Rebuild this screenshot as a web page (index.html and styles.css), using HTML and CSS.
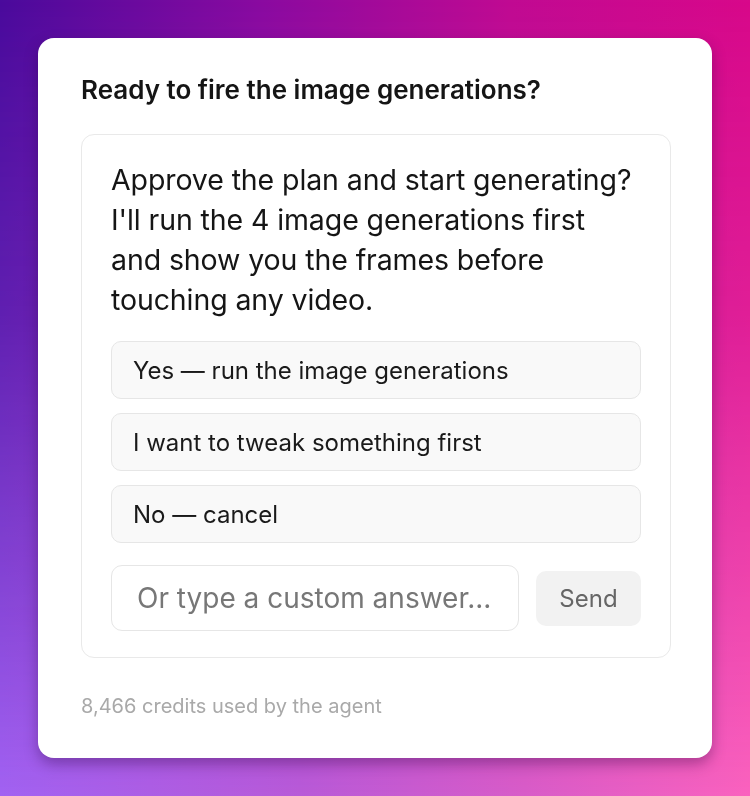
FILE: index.html
```html
<!DOCTYPE html>
<html>
<head>
<meta charset="utf-8">
<link rel="stylesheet" href="styles.css">
</head>
<body>
<div class="card">
  <h1 class="title">Ready to fire the image generations?</h1>
  <div class="panel">
    <p class="question">Approve the plan and start generating? I'll run the 4 image generations first and show you the frames before touching any video.</p>
    <div class="options">
      <button class="option">Yes — run the image generations</button>
      <button class="option">I want to tweak something first</button>
      <button class="option">No — cancel</button>
    </div>
    <div class="reply">
      <input class="answer" type="text" placeholder="Or type a custom answer...">
      <button class="send">Send</button>
    </div>
  </div>
  <div class="footer">8,466 credits used by the agent</div>
</div>
</body>
</html>
```
FILE: styles.css
```css
html, body {
  margin: 0;
  padding: 0;
}
html {
  background: linear-gradient(90deg, #4a0a9c 0%, #8a0aa0 35%, #c00a92 68%, #d8088a 100%);
}
body {
  width: 750px;
  height: 796px;
  overflow: hidden;
  font-family: Inter, "Noto Sans", sans-serif;
  padding: 38px;
  box-sizing: border-box;
}
body::before {
  content: "";
  position: fixed;
  inset: 0;
  background: linear-gradient(90deg, #a262f2 0%, #b85ad8 40%, #d85cc8 70%, #fa62be 100%);
  -webkit-mask-image: linear-gradient(180deg, rgba(0,0,0,0) 0%, rgba(0,0,0,0.25) 40%, rgba(0,0,0,1) 100%);
  mask-image: linear-gradient(180deg, rgba(0,0,0,0) 0%, rgba(0,0,0,0.25) 40%, rgba(0,0,0,1) 100%);
  z-index: 0;
}
.card {
  position: relative;
  z-index: 1;
  background: #fff;
  border-radius: 16px;
  height: 720px;
  box-sizing: border-box;
  padding: 35px 41px 0 43px;
  box-shadow: 0 6px 14px rgba(40, 0, 60, 0.35);
}
.title {
  margin: 0;
  font-size: 26px;
  font-weight: 600;
  color: #151515;
  line-height: 34px;
  letter-spacing: 0;
}
.panel {
  margin-top: 27px;
  border: 1px solid #e9e9e9;
  border-radius: 13px;
  padding: 25px 29px 26px 29px;
}
.question {
  margin: 0;
  font-size: 28.5px;
  line-height: 40px;
  color: #151515;
  font-weight: 400;
  letter-spacing: -0.1px;
}
.options {
  margin-top: 21px;
  display: flex;
  flex-direction: column;
  gap: 14px;
}
.option {
  height: 58px;
  text-align: left;
  font-family: inherit;
  font-size: 24px;
  color: #1a1a1a;
  background: #f9f9f9;
  border: 1.5px solid #e6e6e6;
  border-radius: 10px;
  padding: 0 21px;
}
.reply {
  margin-top: 22px;
  display: flex;
  align-items: center;
  gap: 17px;
}
.answer {
  width: 408px;
  height: 66px;
  box-sizing: border-box;
  border: 1.5px solid #e6e6e6;
  border-radius: 11px;
  padding: 0 20px 0 25px;
  font-family: inherit;
  font-size: 28px;
  color: #222;
  background: #fff;
  outline: none;
}
.answer::placeholder {
  color: #777;
}
.send {
  width: 105px;
  height: 55px;
  border: none;
  border-radius: 10px;
  background: #f2f2f2;
  color: #666;
  font-family: inherit;
  font-size: 24px;
}
.footer {
  margin-top: 36px;
  font-size: 20px;
  color: #a9a9a9;
}
```
